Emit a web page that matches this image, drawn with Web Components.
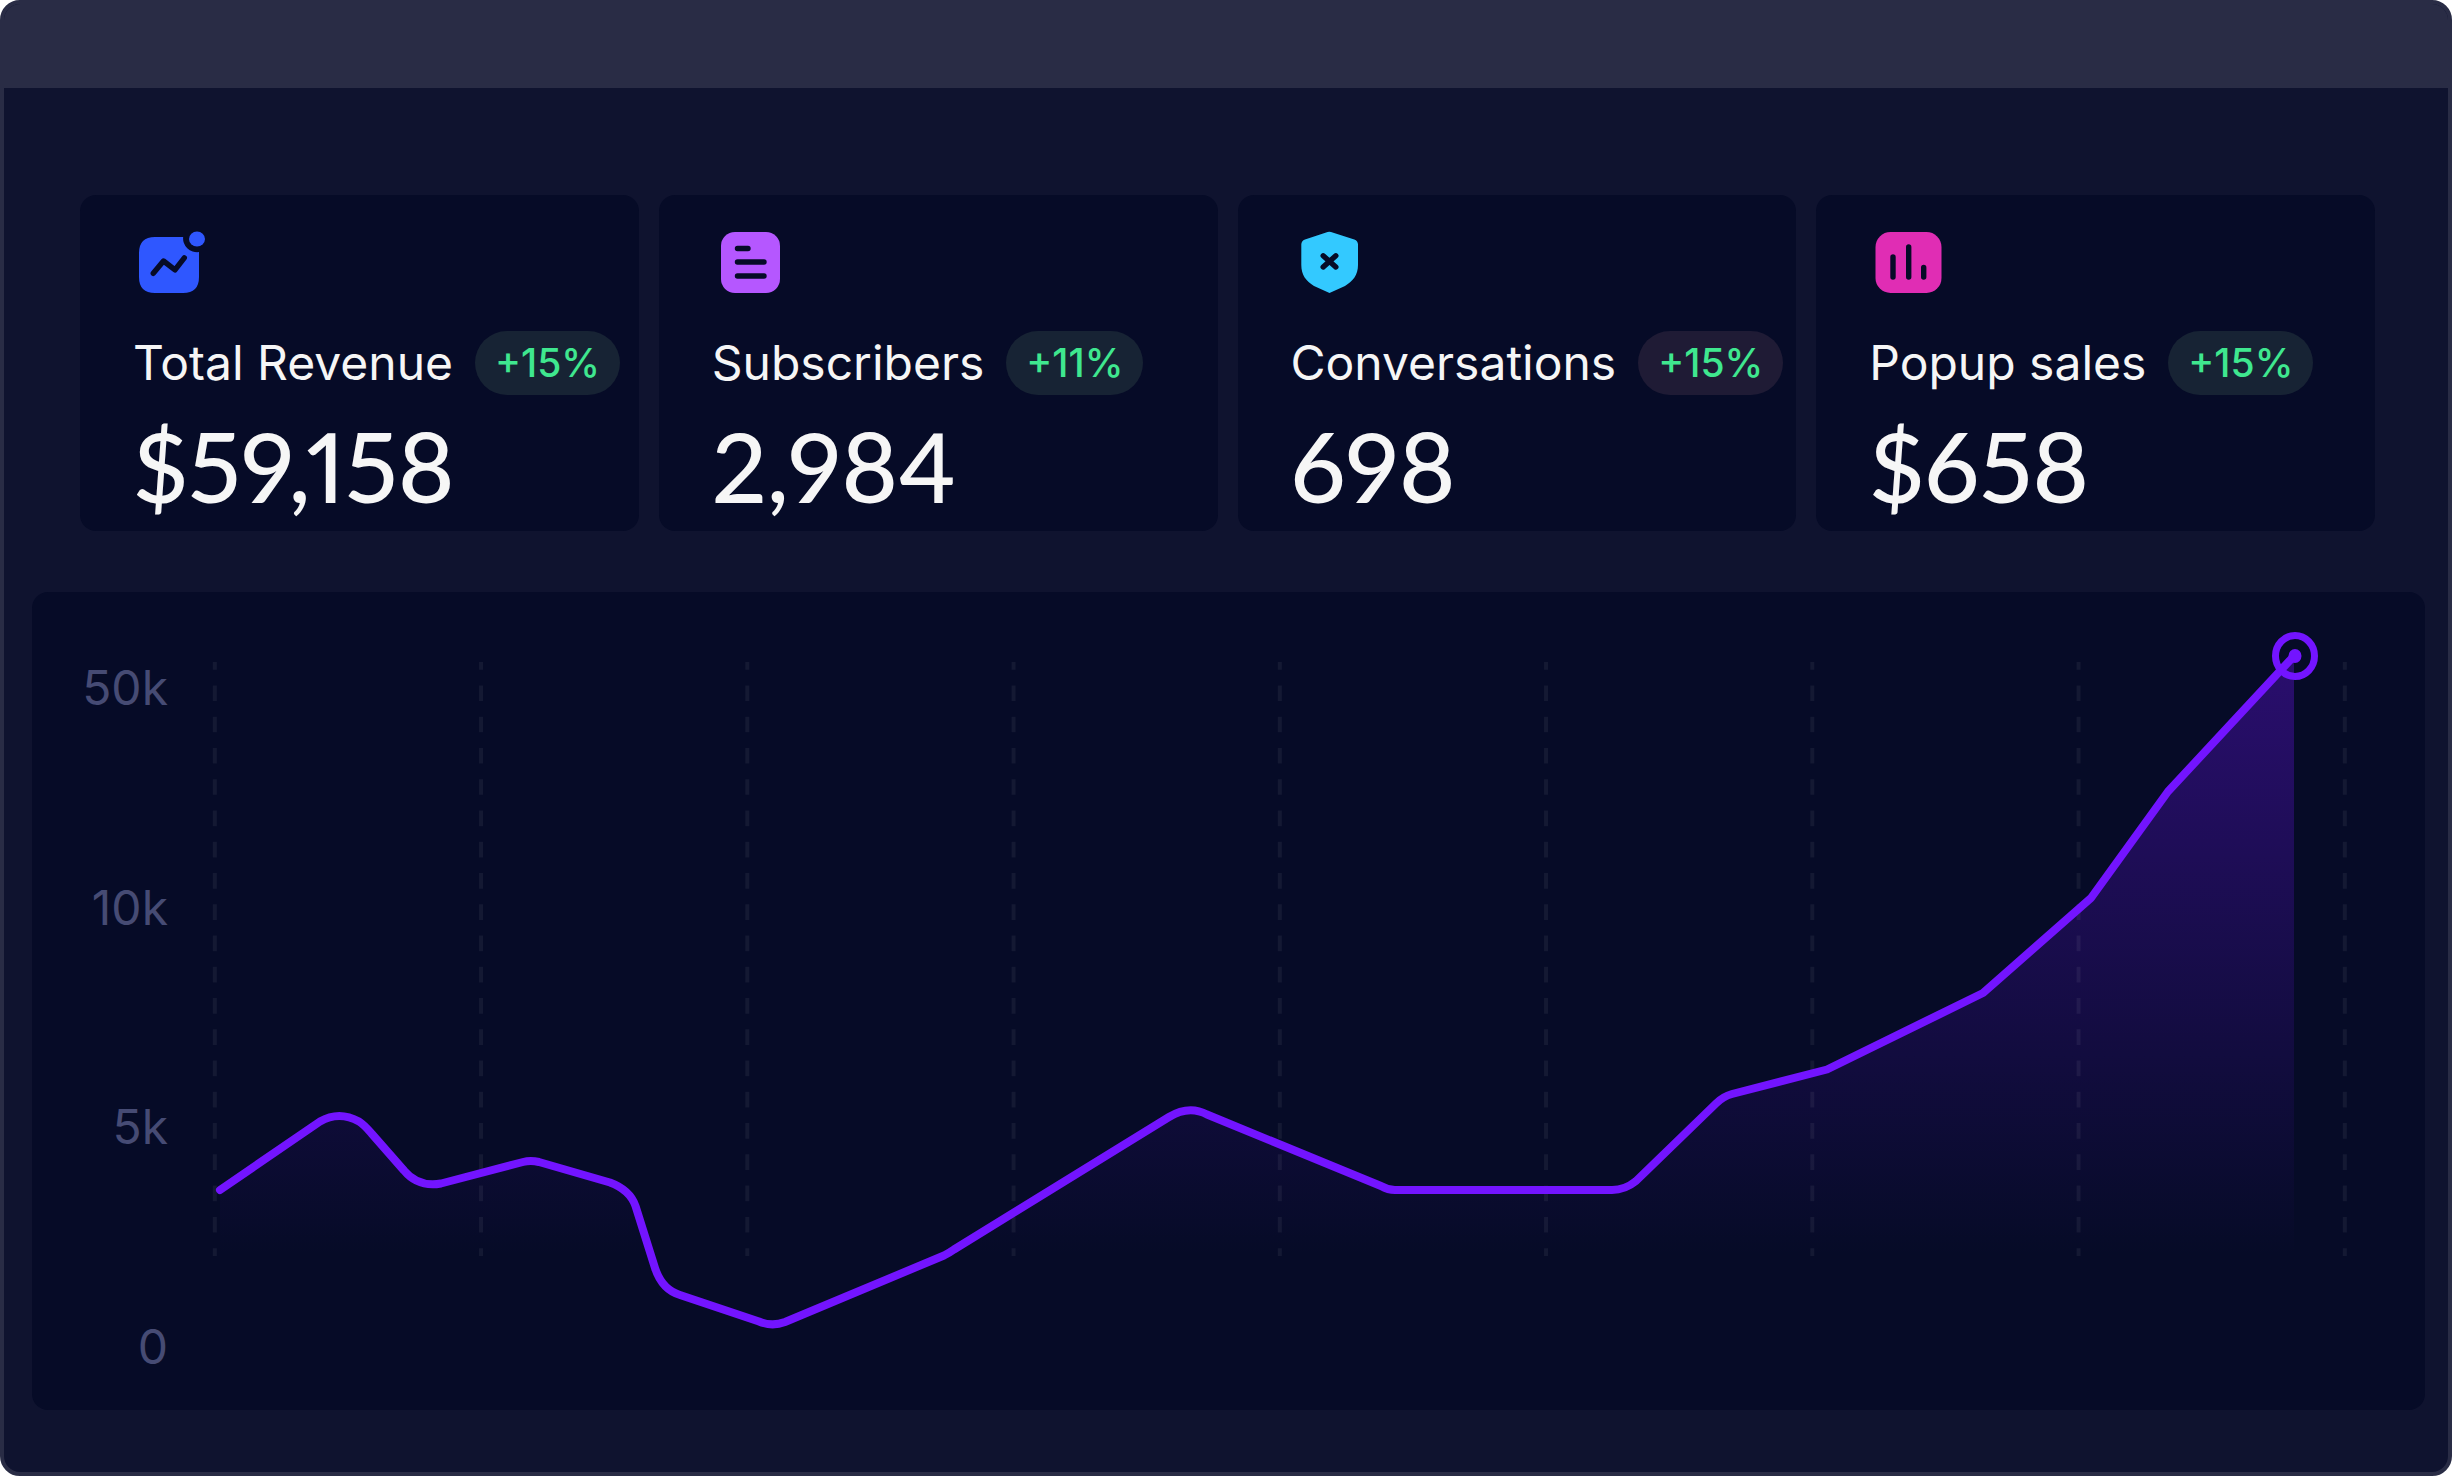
<!DOCTYPE html>
<html lang="en">
<head>
<meta charset="utf-8">
<meta name="viewport" content="width=device-width, initial-scale=1">
<title>Dashboard</title>
<style>
  html, body { margin: 0; background: #fff; }
  body {
    --frame: #292c45;
    --surface: #0f132f;
    --panel: #060b27;
    --text: #f6f6f6;
    --muted: #464b74;
    --accent: #7314ff;
    --positive: #3fe78f;
    font-family: Inter, "Liberation Sans", sans-serif;
    color: var(--text);
  }
</style>
</head>
<body>
<dashboard-window>
  <stat-grid>
    <stat-card>
      <stat-icon slot="icon" name="trend"></stat-icon>
      <span slot="label">Total Revenue</span>
      <trend-badge slot="badge">+15%</trend-badge>
      <span slot="value">$59,158</span>
    </stat-card>
    <stat-card>
      <stat-icon slot="icon" name="list"></stat-icon>
      <span slot="label">Subscribers</span>
      <trend-badge slot="badge">+11%</trend-badge>
      <span slot="value">2,984</span>
    </stat-card>
    <stat-card>
      <stat-icon slot="icon" name="shield"></stat-icon>
      <span slot="label">Conversations</span>
      <trend-badge slot="badge" tone="warm">+15%</trend-badge>
      <span slot="value">698</span>
    </stat-card>
    <stat-card>
      <stat-icon slot="icon" name="bars"></stat-icon>
      <span slot="label">Popup sales</span>
      <trend-badge slot="badge">+15%</trend-badge>
      <span slot="value">$658</span>
    </stat-card>
  </stat-grid>
  <area-chart>
    <span>50k</span>
    <span>10k</span>
    <span>5k</span>
    <span>0</span>
  </area-chart>
</dashboard-window>

<script>
  const define = (name, html) => {
    customElements.define(name, class extends HTMLElement {
      constructor() {
        super();
        this.attachShadow({ mode: 'open' }).innerHTML = html;
      }
    });
  };

  define('dashboard-window', `
    <style>
      :host {
        display: flex; flex-direction: column; box-sizing: border-box;
        min-height: 100vh; border: 4px solid var(--frame); border-radius: 20px;
        background: var(--surface); overflow: hidden;
      }
      header { height: 84px; background: var(--frame); }
      main { display: flex; flex-direction: column; gap: 61px; padding: 107px 23px 62px 28px; }
    </style>
    <header></header>
    <main><slot></slot></main>`);

  define('stat-grid', `
    <style>
      :host {
        display: grid; grid-template-columns: repeat(4, 1fr); gap: 20px;
        padding: 0 50px 0 48px;
      }
    </style>
    <slot></slot>`);

  define('stat-card', `
    <style>
      :host { display: block; min-width: 0; border-radius: 16px; background: var(--panel); }
      article { display: flex; flex-direction: column; padding: 36px 16px 25px 53px; }
      .row { display: flex; align-items: center; gap: 22px; height: 64px; margin-top: 38px; }
      h2 { margin: 0; font-size: 48px; line-height: 64px; font-weight: 400; white-space: nowrap; }
      p {
        margin: 31px 0 0; font-family: Lato, Inter, sans-serif; font-size: 97px; line-height: 80px;
        font-weight: 500; font-variant-numeric: proportional-nums;
      }
    </style>
    <article>
      <slot name="icon"></slot>
      <div class="row"><h2><slot name="label"></slot></h2><slot name="badge"></slot></div>
      <p><slot name="value"></slot></p>
    </article>`);

  define('trend-badge', `
    <style>
      :host {
        display: block; padding: 0 20px; border-radius: 32px; background: #172334;
        color: var(--positive); font-size: 39px; line-height: 64px; font-weight: 500;
        white-space: nowrap;
      }
      :host([tone="warm"]) { background: #1f1b35; }
    </style>
    <slot></slot>`);

  const icons = {
    trend: `
      <path fill="#2f57ff" d="M22 6H50.200A14 13.500 0 0 0 66 21V46Q66 62 50 62H22Q6 62 6 46V22Q6 6 22 6Z"/>
      <ellipse cx="64" cy="8" rx="8" ry="7.500" fill="#2f57ff"/>
      <path class="cut" d="M20.300 42.300 30.500 30 42 38.800 51.300 26.800"/>`,
    list: `
      <rect x="9" y="1" width="59" height="61" rx="14" fill="#b557ff"/>
      <path class="cut" d="M25.500 17.500H36M25.500 31H52M25.500 45H52"/>`,
    shield: `
      <path fill="#33c9ff" d="M36.600 1.100Q38.300.3 40 1.100L63.300 8.400Q67 9.800 67 13.500V34C67 44 62 50 54 55L38.500 62 23 55C15 50 10.300 44 10.300 34V13.500Q10.300 9.800 14 8.400Z"/>
      <path class="cut" d="M32.200 24.800 44.800 36M44.800 24.800 32.200 36"/>`,
    bars: `
      <rect x="6.500" y="1" width="66" height="61" rx="15" fill="#e02db4"/>
      <path class="cut" d="M24 26V46M39.700 16V46M54.700 36.500V46"/>`
  };

  customElements.define('stat-icon', class extends HTMLElement {
    constructor() {
      super();
      this.attachShadow({ mode: 'open' });
    }
    connectedCallback() {
      this.shadowRoot.innerHTML = `
        <style>
          :host { display: block; }
          svg { display: block; overflow: visible; }
          .cut {
            fill: none; stroke: var(--panel); stroke-width: 5.400;
            stroke-linecap: round; stroke-linejoin: round;
          }
        </style>
        <svg width="72" height="62" viewBox="0 0 72 62" aria-hidden="true">${icons[this.getAttribute('name')]}</svg>`;
    }
  });

  const line = 'M220 1190 320 1121.500Q339 1110.500 359 1121.500C365 1125.500 368 1129.500 372 1134L404 1170.500Q418 1187.500 441 1183.500L523 1162Q530.500 1160 539 1162L610 1182.500Q630 1190 635.500 1206L655 1268Q662 1289.500 680 1295L759 1321.500Q772 1327 785 1322L944 1255.500Q949 1253 954 1249.500L1169 1117Q1189 1105 1207 1114.500L1381 1186Q1388 1190 1395 1190H1612Q1625 1190 1636 1181L1716 1103.500Q1723 1096.500 1732 1094L1827 1069.500 1983 993 2091 898 2168 791.500 2294 656';
  const gridLines = Array.from({ length: 9 }, (_, i) => {
    const x = 214.8 + i * 266.25;
    return `<path d="M${x} 662V1256"/>`;
  }).join('');

  define('area-chart', `
    <style>
      :host {
        display: grid; grid-template-columns: 136px 1fr; column-gap: 40px;
        padding: 28px 72px 39px 0; border-radius: 16px; background: var(--panel);
      }
      .axis {
        display: flex; flex-direction: column; justify-content: space-between; align-items: flex-end;
        padding-top: 44px; color: var(--muted);
        font-size: 48px; line-height: 48px; font-weight: 400;
      }
      svg { display: block; width: 100%; height: auto; }
      .grid { stroke: #fff; stroke-opacity: .06; stroke-width: 4; stroke-dasharray: 15.630; stroke-dashoffset: 7.800; }
      .line { fill: none; stroke: var(--accent); stroke-width: 8; stroke-linecap: round; stroke-linejoin: round; }
      .ring { fill: none; stroke: var(--accent); stroke-width: 7; }
      .dot { fill: var(--accent); }
    </style>
    <div class="axis"><slot></slot></div>
    <svg viewBox="208 620 2145 751" role="img" aria-label="Revenue over time">
      <defs>
        <linearGradient id="fade" gradientUnits="userSpaceOnUse" x1="0" y1="656" x2="0" y2="1256">
          <stop offset="0" stop-color="#7314ff" stop-opacity=".33"/>
          <stop offset="1" stop-color="#7314ff" stop-opacity="0"/>
        </linearGradient>
      </defs>
      <path fill="url(#fade)" d="${line}V1340H220Z"/>
      <g class="grid">${gridLines}</g>
      <path class="line" d="${line}"/>
      <ellipse class="ring" cx="2295" cy="656" rx="19.500" ry="20.500"/>
      <ellipse class="dot" cx="2295" cy="656" rx="6.500" ry="7"/>
    </svg>`);
</script>
</body>
</html>
